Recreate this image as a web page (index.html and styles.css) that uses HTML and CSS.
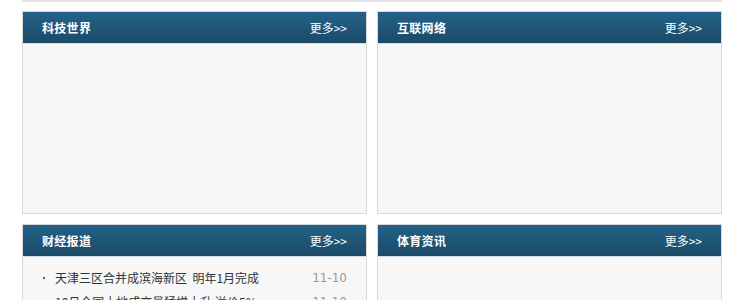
FILE: index.html
```html
<!DOCTYPE html>
<html>
<head>
<meta charset="utf-8">
<link rel="stylesheet" href="styles.css">
</head>
<body>
<div class="wrap">
  <div class="grid">
    <div class="panel">
      <div class="head"><span class="title">科技世界</span><a class="more" href="#">更多&gt;&gt;</a></div>
      <div class="body"></div>
    </div>
    <div class="panel">
      <div class="head"><span class="title">互联网络</span><a class="more" href="#">更多&gt;&gt;</a></div>
      <div class="body"></div>
    </div>
    <div class="panel">
      <div class="head"><span class="title">财经报道</span><a class="more" href="#">更多&gt;&gt;</a></div>
      <ul class="list">
        <li><span class="dot"></span><span class="txt">天津三区合并成滨海新区&nbsp;&nbsp;明年1月完成</span><span class="date">11-10</span></li>
        <li><span class="dot"></span><span class="txt">10月全国土地成交量猛增大升&nbsp;溢价5%</span><span class="date">11-10</span></li>
      </ul>
    </div>
    <div class="panel">
      <div class="head"><span class="title">体育资讯</span><a class="more" href="#">更多&gt;&gt;</a></div>
      <div class="body"></div>
    </div>
  </div>
</div>
</body>
</html>
```
FILE: styles.css
```css
html, body {
  margin: 0;
  padding: 0;
  background: #fff;
  font-family: "Noto Sans CJK SC", "Liberation Sans", sans-serif;
  font-size: 12px;
}
.wrap {
  margin-left: 22px;
  width: 700px;
  border-top: 2px solid #e2e2e2;
  padding-top: 9px;
}
.grid {
  display: grid;
  grid-template-columns: 345px 345px;
  column-gap: 10px;
  row-gap: 10px;
}
.panel {
  height: 201px;
  border: 1px solid #d8d8d8;
  background: #f7f7f7;
  display: flex;
  flex-direction: column;
  overflow: hidden;
}
.head {
  height: 31px;
  flex: none;
  border-bottom: 1px solid #cfe0ea;
  background: linear-gradient(#23628a, #1b4a66);
  display: flex;
  align-items: center;
  justify-content: space-between;
  padding: 0 19px 0 19px;
  color: #fff;
}
.title {
  font-weight: bold;
  font-size: 12px;
  letter-spacing: 0.3px;
}
.more {
  color: #fff;
  text-decoration: none;
  font-size: 12px;
}
.body {
  flex: 1;
}
.list {
  list-style: none;
  margin: 0;
  padding: 9px 19px 0 20px;
}
.list li {
  display: flex;
  align-items: center;
  height: 24px;
  line-height: 24px;
}
.dot {
  width: 2px;
  height: 2px;
  background: #c0304a;
  margin-right: 10px;
  flex: none;
}
.txt {
  flex: 1;
  color: #333;
  white-space: nowrap;
  overflow: hidden;
}
.date {
  color: #999;
  font-family: "DejaVu Sans", sans-serif;
  font-size: 12px;
  width: 40px;
  text-align: right;
}
```
